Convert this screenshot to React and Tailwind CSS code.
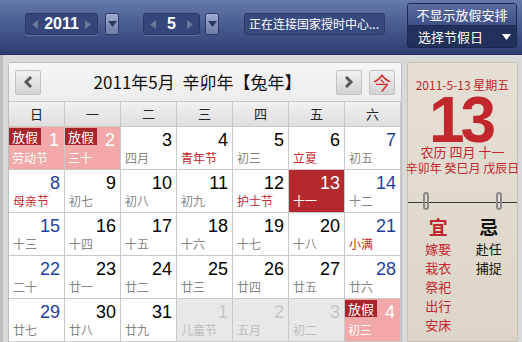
import React from "react";

const FONT = { fontFamily: '"Liberation Sans", "Noto Sans CJK SC", sans-serif' };
const CJK = { fontFamily: '"Noto Sans CJK SC", "Liberation Sans", sans-serif' };

// day cells: n = number, l = lunar/festival, t = type
const rows = [
  [
    { n: 1, l: "劳动节", t: "holiday" },
    { n: 2, l: "三十", t: "holiday" },
    { n: 3, l: "四月" },
    { n: 4, l: "青年节", red: true },
    { n: 5, l: "初三" },
    { n: 6, l: "立夏", red: true },
    { n: 7, l: "初五" },
  ],
  [
    { n: 8, l: "母亲节", red: true },
    { n: 9, l: "初七" },
    { n: 10, l: "初八" },
    { n: 11, l: "初九" },
    { n: 12, l: "护士节", red: true },
    { n: 13, l: "十一", t: "today" },
    { n: 14, l: "十二" },
  ],
  [
    { n: 15, l: "十三" },
    { n: 16, l: "十四" },
    { n: 17, l: "十五" },
    { n: 18, l: "十六" },
    { n: 19, l: "十七" },
    { n: 20, l: "十八" },
    { n: 21, l: "小满", red: true },
  ],
  [
    { n: 22, l: "二十" },
    { n: 23, l: "廿一" },
    { n: 24, l: "廿二" },
    { n: 25, l: "廿三" },
    { n: 26, l: "廿四" },
    { n: 27, l: "廿五" },
    { n: 28, l: "廿六" },
  ],
  [
    { n: 29, l: "廿七" },
    { n: 30, l: "廿八" },
    { n: 31, l: "廿九" },
    { n: 1, l: "儿童节", t: "other" },
    { n: 2, l: "五月", t: "other" },
    { n: 3, l: "初二", t: "other" },
    { n: 4, l: "初三", t: "holiday" },
  ],
];

const weekdays = ["日", "一", "二", "三", "四", "五", "六"];

function Tri({ className = "" }) {
  return (
    <svg width="9" height="6" viewBox="0 0 9 6" className={className}>
      <path d="M0 0 H9 L4.5 6 Z" fill="currentColor" />
    </svg>
  );
}

function SideArrow({ dir }) {
  return (
    <svg width="6" height="9" viewBox="0 0 6 9">
      <path d={dir === "l" ? "M6 0 V9 L0 4.5 Z" : "M0 0 V9 L6 4.5 Z"} fill="#6c7898" />
    </svg>
  );
}

function Spinner({ value, width }) {
  return (
    <div
      className={`h-[22px] ${width} flex items-center justify-between px-[6px] rounded-[3px] bg-[#34467a] border border-[#2a3868] shadow-[0_1px_0_#5f72a4]`}
    >
      <SideArrow dir="l" />
      <span className="text-white font-bold text-[16px] leading-none" style={FONT}>
        {value}
      </span>
      <SideArrow dir="r" />
    </div>
  );
}

function DropBtn() {
  return (
    <div className="h-[22px] w-[14px] flex items-center justify-center rounded-[2px] border border-[#2b3a68] bg-gradient-to-b from-[#a0acd0] to-[#6d7ca8] text-[#2d3762]">
      <Tri />
    </div>
  );
}

function Cell({ d, col }) {
  const base = "relative h-[43px] border-r border-b border-[#c9c9c9] overflow-hidden";
  if (d.t === "holiday") {
    return (
      <div className={`${base} bg-[#f2a8a8]`}>
        <div className="absolute left-0 top-[1px] h-[17px] px-[3px] bg-[#a8262b] text-white text-[13px] leading-[17px]" style={CJK}>
          放假
        </div>
        <div className="absolute right-[5px] top-[3px] text-white text-[18px] leading-[20px]" style={FONT}>
          {d.n}
        </div>
        <div className="absolute left-[3px] top-[22px] text-white text-[12px] leading-[18px]" style={CJK}>
          {d.l}
        </div>
      </div>
    );
  }
  let bg = "bg-white";
  let num = col === 0 || col === 6 ? "text-[#1f3f9c]" : "text-black";
  let lun = d.red ? "text-[#c4262e]" : "text-[#858585]";
  if (d.t === "today") {
    bg = "bg-[#b3292e]";
    num = "text-white";
    lun = "text-white";
  } else if (d.t === "other") {
    bg = "bg-[#e8e8e8]";
    num = "text-[#c6c6c6]";
    lun = "text-[#bdbdbd]";
  }
  return (
    <div className={`${base} ${bg}`}>
      <div className={`absolute right-[4px] top-[3px] text-[18px] leading-[20px] ${num}`} style={FONT}>
        {d.n}
      </div>
      <div className={`absolute left-[4px] top-[22px] text-[12px] leading-[18px] ${lun}`} style={CJK}>
        {d.l}
      </div>
    </div>
  );
}

function NavBtn({ children }) {
  return (
    <div className="w-[26px] h-[25px] flex items-center justify-center rounded-[2px] border border-[#c2c2c2] bg-gradient-to-b from-[#f2f2f2] to-[#d3d3d3]">
      {children}
    </div>
  );
}

function Ring() {
  return <div className="w-[6px] h-[18px] rounded-full border-[2px] border-[#8a8a8a]" />;
}

export default function App() {
  return (
    <div className="w-[522px] h-[342px] overflow-hidden bg-[#d9d9d9] select-none" style={CJK}>
      {/* top bar */}
      <div className="h-[55px] flex items-start bg-gradient-to-b from-[#6579ab] to-[#2c3d71] border-b border-[#24325e]">
        <div className="flex items-center mt-[13px] ml-[25px]">
          <Spinner value="2011" width="w-[73px]" />
          <div className="ml-[7px]">
            <DropBtn />
          </div>
          <div className="ml-[24px]">
            <Spinner value="5" width="w-[57px]" />
          </div>
          <div className="ml-[5px]">
            <DropBtn />
          </div>
          <div className="ml-[25px] h-[22px] w-[141px] flex items-center pl-[4px] rounded-[3px] bg-[#37497d] border border-[#2b3969] text-white text-[12px] whitespace-nowrap" style={CJK}>
            正在连接国家授时中心...
          </div>
        </div>
        <div className="ml-auto mr-[5px] mt-[3px] w-[110px] rounded-[3px] border border-[#1c284f] overflow-hidden">
          <div className="h-[22px] flex items-center justify-center bg-gradient-to-b from-[#5b6d9f] to-[#3f5186] border-b border-[#1c284f] text-white text-[13px]">
            不显示放假安排
          </div>
          <div className="h-[21px] flex items-center justify-between pl-[10px] pr-[5px] bg-[#22305c] text-white text-[13px]">
            <span>选择节假日</span>
            <Tri className="text-white" />
          </div>
        </div>
      </div>

      {/* body */}
      <div className="flex h-[287px] border-l-[3px] border-[#bcbcbc] pl-[5px] pt-[7px] gap-[5px]">
        {/* calendar */}
        <div className="w-[394px] border-l border-t border-r border-[#bdbdbd] rounded-tl-[3px] bg-[#f1f1f1]">
          <div className="h-[38px] flex items-center pl-[6px] pr-[6px] bg-gradient-to-b from-[#f6f6f6] to-[#ececec]">
            <NavBtn>
              <svg width="10" height="12" viewBox="0 0 10 12">
                <path d="M8 1 L3 6 L8 11" fill="none" stroke="#585858" strokeWidth="3" />
              </svg>
            </NavBtn>
            <div className="flex-1 flex justify-center pl-[18px] text-[17px] text-[#111]" style={CJK}>
              2011年5月&nbsp;&nbsp;辛卯年【兔年】
            </div>
            <NavBtn>
              <svg width="10" height="12" viewBox="0 0 10 12">
                <path d="M2 1 L7 6 L2 11" fill="none" stroke="#585858" strokeWidth="3" />
              </svg>
            </NavBtn>
            <div className="ml-[7px]">
              <NavBtn>
                <span className="text-[#d02a2a] text-[18px] leading-none">今</span>
              </NavBtn>
            </div>
          </div>
          <div className="grid grid-cols-7 h-[26px] border-t border-[#c9c9c9] bg-gradient-to-b from-[#f0f0f0] to-[#dedede]">
            {weekdays.map((w) => (
              <div key={w} className="flex items-center justify-center border-r border-b border-[#c9c9c9] text-[13px] text-[#222]">
                {w}
              </div>
            ))}
          </div>
          <div className="grid grid-cols-7">
            {rows.map((r, ri) => r.map((d, ci) => <Cell key={`${ri}-${ci}`} d={d} col={ci} />))}
          </div>
        </div>

        {/* daily page */}
        <div className="w-[111px] border border-[#c7c0b2] rounded-t-[3px] bg-gradient-to-b from-[#e6e0d4] to-[#dcd5c8] flex flex-col items-center">
          <div className="mt-[14px] text-[12px] text-[#c2262e] leading-[16px] whitespace-nowrap" style={CJK}>
            2011-5-13 星期五
          </div>
          <div className="mt-[3px] text-[64px] font-bold text-[#c1272d] leading-[48px] tracking-[-4px] pr-[4px]" style={FONT}>
            13
          </div>
          <div className="text-[13px] text-[#c2262e] leading-[16px] whitespace-nowrap">
            农历 四月 十一
          </div>
          <div className="text-[12px] text-[#c2262e] leading-[16px] whitespace-nowrap">
            辛卯年 癸巳月 戊辰日
          </div>
          <div className="relative w-full mt-[16px] h-[20px]">
            <div className="absolute left-0 right-0 top-[10px] h-[1px] bg-[#3a3a3a]" />
            <div className="absolute left-[15px] top-0">
              <Ring />
            </div>
            <div className="absolute left-[88px] top-0">
              <Ring />
            </div>
          </div>
          <div className="w-full flex mt-[3px]">
            <div className="w-1/2 flex flex-col items-center pl-[6px]">
              <div className="text-[19px] font-bold text-[#c1272d] leading-[24px]">宜</div>
              {["嫁娶", "栽衣", "祭祀", "出行", "安床"].map((s) => (
                <div key={s} className="text-[13px] text-[#c4262e] leading-[19px]">
                  {s}
                </div>
              ))}
            </div>
            <div className="w-1/2 flex flex-col items-center pr-[2px]">
              <div className="text-[19px] font-bold text-[#111] leading-[24px]">忌</div>
              {["赴任", "捕捉"].map((s) => (
                <div key={s} className="text-[13px] text-[#111] leading-[19px]">
                  {s}
                </div>
              ))}
            </div>
          </div>
        </div>
      </div>
    </div>
  );
}
